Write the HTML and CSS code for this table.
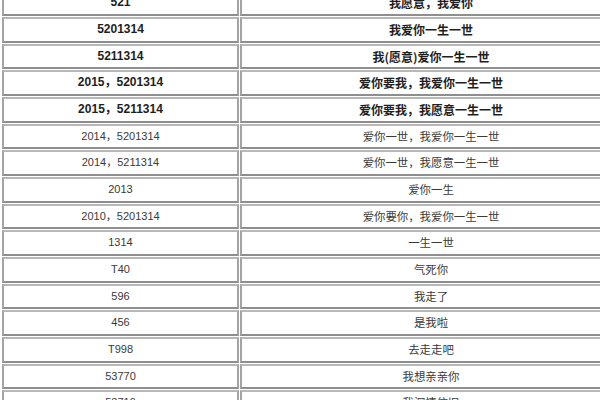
FILE: index.html
```html
<!DOCTYPE html>
<html lang="zh-CN">
<head>
<meta charset="utf-8">
<title>数字密码</title>
<link rel="stylesheet" href="styles.css">
</head>
<body>
<div class="frame">
  <table class="codes">
    <tbody>
      <tr class="strong"><td class="num">521</td><td class="mean">我愿意，我爱你</td></tr>
      <tr class="strong"><td class="num">5201314</td><td class="mean">我爱你一生一世</td></tr>
      <tr class="strong"><td class="num">5211314</td><td class="mean">我(愿意)爱你一生一世</td></tr>
      <tr class="strong"><td class="num">2015，5201314</td><td class="mean">爱你要我，我爱你一生一世</td></tr>
      <tr class="strong"><td class="num">2015，5211314</td><td class="mean">爱你要我，我愿意一生一世</td></tr>
      <tr><td class="num">2014，5201314</td><td class="mean">爱你一世，我爱你一生一世</td></tr>
      <tr><td class="num">2014，5211314</td><td class="mean">爱你一世，我愿意一生一世</td></tr>
      <tr><td class="num">2013</td><td class="mean">爱你一生</td></tr>
      <tr><td class="num">2010，5201314</td><td class="mean">爱你要你，我爱你一生一世</td></tr>
      <tr><td class="num">1314</td><td class="mean">一生一世</td></tr>
      <tr><td class="num">T40</td><td class="mean">气死你</td></tr>
      <tr><td class="num">596</td><td class="mean">我走了</td></tr>
      <tr><td class="num">456</td><td class="mean">是我啦</td></tr>
      <tr><td class="num">T998</td><td class="mean">去走走吧</td></tr>
      <tr><td class="num">53770</td><td class="mean">我想亲亲你</td></tr>
      <tr><td class="num">53719</td><td class="mean">我深情依旧</td></tr>
    </tbody>
  </table>
</div>
</body>
</html>
```

FILE: styles.css
```css
html, body {
  margin: 0;
  padding: 0;
  background: #ffffff;
  overflow: hidden;
}

.frame {
  width: 600px;
  height: 400px;
  overflow: hidden;
}

.codes {
  margin: -10.65px 0 0 1px;
  width: 622px;
  border-collapse: separate;
  border-spacing: 1px;
  table-layout: fixed;
  font-family: "Liberation Sans", "Noto Sans CJK SC", sans-serif;
  font-size: 11px;
  color: #3a3a3a;
}

.codes td {
  box-sizing: border-box;
  padding: 0;
  height: 25.65px;
  line-height: 21.65px;
  text-align: center;
  vertical-align: middle;
  white-space: nowrap;
  border-top: 2px solid #b8b8b8;
  border-bottom: 2px solid #8e8e8e;
  border-left: 2px solid #a4a4a4;
  border-right: 2px solid #a4a4a4;
}

.codes .num {
  width: 237px;
}

.codes .mean {
  font-family: "Noto Sans CJK SC", sans-serif;
  font-size: 11.4px;
}

.codes .strong td {
  font-weight: bold;
  color: #1e1e1e;
  font-size: 12px;
}
```
